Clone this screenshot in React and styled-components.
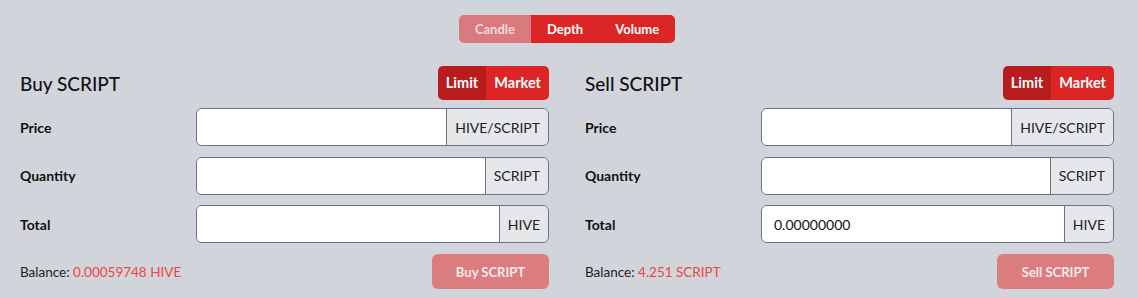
import React from 'react';
import styled, {createGlobalStyle} from 'styled-components';

const GlobalStyle = createGlobalStyle`
  body {
    margin: 0;
    background: #d1d5db;
    font-family: "Lato", "Noto Sans", sans-serif;
    color: #1f2937;
  }
`;

const forms = [
  {title: 'Buy SCRIPT', total: '', balance: '0.00059748 HIVE', action: 'Buy SCRIPT'},
  {title: 'Sell SCRIPT', total: '0.00000000', balance: '4.251 SCRIPT', action: 'Sell SCRIPT'},
];

const fields = [
  {label: 'Price', unit: 'HIVE/SCRIPT', key: 'price'},
  {label: 'Quantity', unit: 'SCRIPT', key: 'qty'},
  {label: 'Total', unit: 'HIVE', key: 'total'},
];

const OrderForm = ({form}) => (
  <Column>
    <Header>
      <Title>{form.title}</Title>
      <Toggle>
        <ToggleBtn active>Limit</ToggleBtn>
        <ToggleBtn>Market</ToggleBtn>
      </Toggle>
    </Header>
    {fields.map(f => (
      <Row key={f.key}>
        <Label>{f.label}</Label>
        <InputGroup>
          <Input defaultValue={f.key === 'total' ? form.total : ''} />
          <Addon>{f.unit}</Addon>
        </InputGroup>
      </Row>
    ))}
    <Footer>
      <Balance>
        Balance: <span>{form.balance}</span>
      </Balance>
      <Submit disabled>{form.action}</Submit>
    </Footer>
  </Column>
);

const App = () => (
  <Page>
    <GlobalStyle />
    <Tabs>
      <Tab faded>Candle</Tab>
      <Tab>Depth</Tab>
      <Tab>Volume</Tab>
    </Tabs>
    <Columns>
      {forms.map(f => <OrderForm key={f.title} form={f} />)}
    </Columns>
  </Page>
);

const Page = styled.div`
  padding: 15px 23px 0 20px;
  height: 298px;
  box-sizing: border-box;
`;

const Tabs = styled.div`
  display: flex;
  width: fit-content;
  margin: 0 auto;
  border-radius: 5px;
  overflow: hidden;
`;

const Tab = styled.div`
  height: 28px;
  line-height: 28px;
  padding: 0 16px;
  font-size: 13px;
  font-weight: 700;
  color: ${p => p.faded ? '#f3dada' : '#fff'};
  background: ${p => p.faded ? '#d97b7e' : '#dc2626'};
`;

const Columns = styled.div`
  display: grid;
  grid-template-columns: 1fr 1fr;
  column-gap: 36px;
  margin-top: 23px;
`;

const Column = styled.div`
  display: flex;
  flex-direction: column;
`;

const Header = styled.div`
  display: flex;
  align-items: center;
  justify-content: space-between;
  height: 34px;
  margin-bottom: 8px;
`;

const Title = styled.div`
  font-size: 19px;
  font-weight: 500;
  color: #111;
`;

const Toggle = styled.div`
  display: flex;
  border-radius: 5px;
  overflow: hidden;
`;

const ToggleBtn = styled.div`
  height: 34px;
  line-height: 34px;
  padding: 0 8px;
  font-size: 14.5px;
  font-weight: 700;
  color: #fff;
  background: ${p => p.active ? '#b91c1c' : '#dc2626'};
`;

const Row = styled.div`
  display: grid;
  grid-template-columns: 176px 1fr;
  align-items: center;
  margin-bottom: 10.5px;
`;

const Label = styled.div`
  font-size: 14px;
  font-weight: 700;
  color: #111;
`;

const InputGroup = styled.div`
  display: flex;
  height: 38px;
  border: 1px solid #6b7280;
  border-radius: 6px;
  overflow: hidden;
  box-sizing: border-box;
`;

const Input = styled.input`
  flex: 1;
  min-width: 0;
  border: none;
  outline: none;
  background: #fff;
  padding: 0 12px;
  font-family: inherit;
  font-size: 14px;
  color: #111;
`;

const Addon = styled.div`
  display: flex;
  align-items: center;
  padding: 0 8px;
  border-left: 1px solid #6b7280;
  background: #e5e7eb;
  font-size: 14px;
  color: #222;
`;

const Footer = styled.div`
  display: flex;
  align-items: center;
  justify-content: space-between;
  margin-top: 0.5px;
`;

const Balance = styled.div`
  font-size: 13.5px;
  color: #222;
  span {
    color: #ef4444;
  }
`;

const Submit = styled.button`
  height: 35px;
  width: 117px;
  border: none;
  border-radius: 6px;
  background: #db7c7f;
  color: #fbeaea;
  font-family: inherit;
  font-size: 13px;
  font-weight: 700;
`;

export default App;
